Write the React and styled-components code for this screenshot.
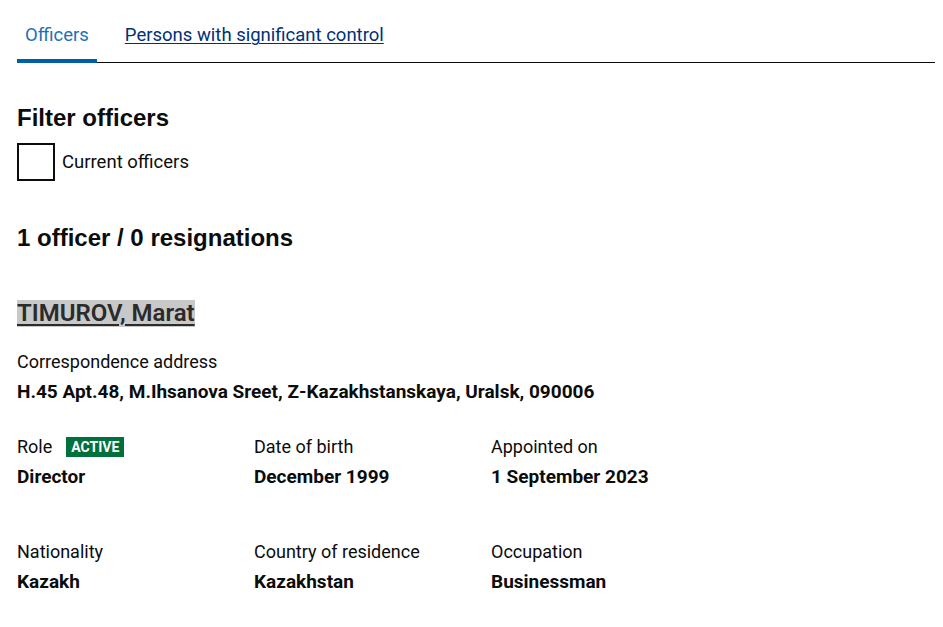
import React from "react";
import styled, { createGlobalStyle } from "styled-components";

const Global = createGlobalStyle`
  html, body { margin: 0; padding: 0; background: #fff; }
  body { font-family: Roboto, "Noto Sans", Arial, sans-serif; color: #0b0c0c; }
`;

const Page = styled.div`
  padding: 0 8px 0 17px;
`;

const Tabs = styled.nav`
  display: flex;
  border-bottom: 1px solid #0b0c0c;
  height: 62px;
  align-items: stretch;
`;

const Tab = styled.a`
  display: flex;
  align-items: flex-start;
  padding: 24px 8px 0;
  margin-right: 20px;
  font-size: 18.5px;
  line-height: 22px;
  color: ${(p) => (p.$active ? "#1d70b8" : "#003078")};
  text-decoration: ${(p) => (p.$active ? "none" : "underline")};
  text-underline-offset: 2px;
  text-decoration-thickness: 1px;
  border-bottom: 4px solid ${(p) => (p.$active ? "#005ea5" : "transparent")};
  margin-bottom: -1px;
  cursor: pointer;
`;

const H2 = styled.h2`
  font-family: "Liberation Sans", Arial, sans-serif;
  font-weight: 700;
  font-size: ${(p) => p.$size || 24}px;
  line-height: 28px;
  margin: 0;
`;

const FilterSection = styled.section`
  margin-top: 41px;
`;

const CheckRow = styled.label`
  display: flex;
  align-items: center;
  gap: 7px;
  margin-top: 11px;
  font-size: 18.5px;
  line-height: 22px;
`;

const Box = styled.span`
  width: 38px;
  height: 38px;
  box-sizing: border-box;
  border: 2px solid #0b0c0c;
  background: #fff;
`;

const CountHeading = styled(H2)`
  margin-top: 43px;
`;

const NameLink = styled.a`
  display: inline-block;
  margin-top: 48px;
  font-size: 24px;
  line-height: 27px;
  font-weight: 600;
  color: #2b2b2b;
  background: #c8c8c8;
  text-decoration: underline;
  text-decoration-thickness: 2px;
  text-underline-offset: 3px;
`;

const Label = styled.div`
  font-size: 18px;
  line-height: 20px;
  display: flex;
  align-items: center;
  gap: 14px;
`;

const Value = styled.div`
  font-size: 19px;
  line-height: 20px;
  font-weight: 700;
  margin-top: 10px;
`;

const Address = styled.div`
  margin-top: 25px;
`;

const Grid = styled.div`
  display: grid;
  grid-template-columns: repeat(3, 237px);
  row-gap: 55px;
  margin-top: 35px;
`;

const Tag = styled.span`
  background: #00703c;
  color: #fff;
  font-weight: 700;
  font-size: 14px;
  line-height: 20px;
  padding: 0 5px;
`;

const fields = [
  { label: "Role", value: "Director", tag: "ACTIVE" },
  { label: "Date of birth", value: "December 1999" },
  { label: "Appointed on", value: "1 September 2023" },
  { label: "Nationality", value: "Kazakh" },
  { label: "Country of residence", value: "Kazakhstan" },
  { label: "Occupation", value: "Businessman" },
];

export default function App() {
  return (
    <Page>
      <Global />
      <Tabs>
        <Tab $active>Officers</Tab>
        <Tab>Persons with significant control</Tab>
      </Tabs>
      <FilterSection>
        <H2>Filter officers</H2>
        <CheckRow>
          <Box />
          Current officers
        </CheckRow>
      </FilterSection>
      <CountHeading $size={24}>1 officer / 0 resignations</CountHeading>
      <NameLink>TIMUROV, Marat</NameLink>
      <Address>
        <Label>Correspondence address</Label>
        <Value>H.45 Apt.48, M.Ihsanova Sreet, Z-Kazakhstanskaya, Uralsk, 090006</Value>
      </Address>
      <Grid>
        {fields.map((f) => (
          <div key={f.label}>
            <Label>
              {f.label}
              {f.tag && <Tag>{f.tag}</Tag>}
            </Label>
            <Value>{f.value}</Value>
          </div>
        ))}
      </Grid>
    </Page>
  );
}
